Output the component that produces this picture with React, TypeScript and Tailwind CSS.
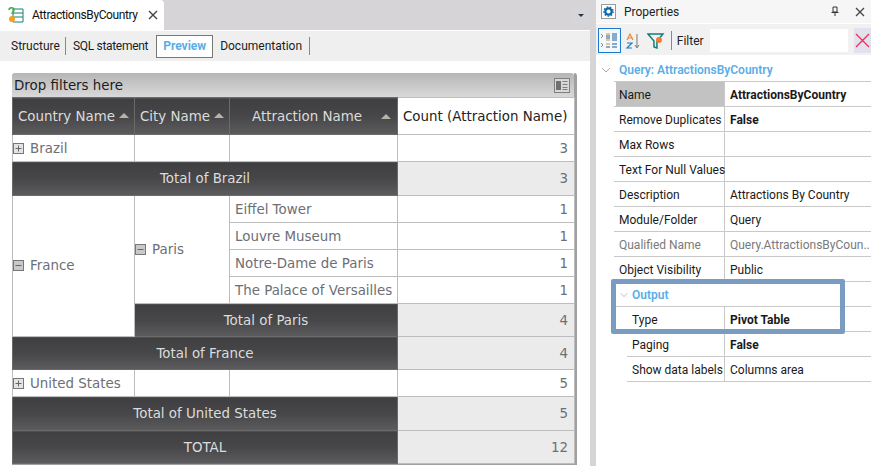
const grid = "font-['DejaVu_Sans',sans-serif] text-[13.4px]";
const ui = "font-['Roboto',sans-serif] text-[12px]";
const darkCell = 'bg-[linear-gradient(#3f3f41_0%,#474749_50%,#5c5c5e_100%)] text-[#dcdcdc] border border-[#6a6a6a] pt-[2px]';
const cell = 'border border-[#bdbdbd] text-[#6c6f76] bg-white pt-[2px]';
const countCell = 'border border-[#bdbdbd] text-[#6c6f76] text-right pr-[6px] pt-[2px]';

function PlusMinus({ minus }: { minus?: boolean }) {
  return (
    <svg width="11" height="11" viewBox="0 0 11 11" className="inline-block align-[-1px] mr-[6px]">
      <rect x="0.5" y="0.5" width="10" height="10" fill={minus ? '#c9c9c9' : '#e4e4e4'} stroke="#777" />
      <path d={minus ? 'M2.5 5.5h6' : 'M2.5 5.5h6M5.5 2.5v6'} stroke="#666" strokeWidth="1" />
    </svg>
  );
}

function SortUp() {
  return <span className="inline-block w-0 h-0 border-x-[5px] border-x-transparent border-b-[5px] border-b-[#b7b3a6] align-[3px]" />;
}

function Total({ label, span, value }: { label: string; span: number; value: number }) {
  return (
    <>
      <td colSpan={span} className={`${darkCell} text-center`}>{label}</td>
      <td className={`${countCell} bg-[#ebebeb]`}>{value}</td>
    </>
  );
}

function PivotTable() {
  return (
    <div className="w-[565px] border-r-[3px] border-b-[1px] border-[#a0a0a0] rounded-tr-[3px]">
      <div className="h-[24px] rounded-t-[3px] bg-[linear-gradient(#b5b5b7,#d9d9da)] flex items-center justify-between pl-[2px] pr-[4px] text-[#1c1c1c]">
        <span className="pt-[2px]">Drop filters here</span>
        <svg width="16" height="15" viewBox="0 0 16 15">
          <rect x="0.5" y="0.5" width="15" height="14" fill="#d8d8d8" stroke="#808080" />
          <rect x="2" y="3" width="5" height="9" fill="#707070" />
          <path d="M8.5 3.5h5M8.5 6.5h5M8.5 9.5h5M8.5 11.5h5" stroke="#808080" />
        </svg>
      </div>
      <table className="w-[562px] table-fixed border-collapse">
        <colgroup>
          <col className="w-[122px]" />
          <col className="w-[95px]" />
          <col className="w-[168px]" />
          <col className="w-[177px]" />
        </colgroup>
        <tbody>
          <tr className="h-[37px]">
            <td className={`${darkCell} pl-[5px] text-[#c9cdd4] whitespace-nowrap`}>Country Name <SortUp /></td>
            <td className={`${darkCell} pl-[5px] text-[#c9cdd4] whitespace-nowrap`}>City Name <SortUp /></td>
            <td className={`${darkCell} text-[#c9cdd4]`}>
              <div className="flex items-center justify-between pl-[22px] pr-[6px]">
                <span>Attraction Name</span>
                <SortUp />
              </div>
            </td>
            <td className="border border-[#bdbdbd] bg-white text-[#222] pl-[5px] pt-[2px] whitespace-nowrap">Count (Attraction Name)</td>
          </tr>
          <tr className="h-[27px]">
            <td className={cell}><PlusMinus />Brazil</td>
            <td className={cell} />
            <td className={cell} />
            <td className={`${countCell} bg-white`}>3</td>
          </tr>
          <tr className="h-[34px]"><Total label="Total of Brazil" span={3} value={3} /></tr>
          <tr className="h-[27px]">
            <td rowSpan={6} className={cell}><div className="pt-[4px] pb-[5px]"><PlusMinus minus />France</div></td>
            <td rowSpan={4} className={cell}><PlusMinus minus />Paris</td>
            <td className={`${cell} pl-[5px]`}>Eiffel Tower</td>
            <td className={`${countCell} bg-white`}>1</td>
          </tr>
          <tr className="h-[27px]">
            <td className={`${cell} pl-[5px]`}>Louvre Museum</td>
            <td className={`${countCell} bg-white`}>1</td>
          </tr>
          <tr className="h-[27px]">
            <td className={`${cell} pl-[5px]`}>Notre-Dame de Paris</td>
            <td className={`${countCell} bg-white`}>1</td>
          </tr>
          <tr className="h-[27px]">
            <td className={`${cell} pl-[5px] whitespace-nowrap`}>The Palace of Versailles</td>
            <td className={`${countCell} bg-white`}>1</td>
          </tr>
          <tr className="h-[33px]"><Total label="Total of Paris" span={2} value={4} /></tr>
          <tr className="h-0" />
          <tr className="h-[33px]"><Total label="Total of France" span={3} value={4} /></tr>
          <tr className="h-[27px]">
            <td className={`${cell} whitespace-nowrap`}><PlusMinus />United States</td>
            <td className={cell} />
            <td className={cell} />
            <td className={`${countCell} bg-white`}>5</td>
          </tr>
          <tr className="h-[34px]"><Total label="Total of United States" span={3} value={5} /></tr>
          <tr className="h-[33px]"><Total label="TOTAL" span={3} value={12} /></tr>
        </tbody>
      </table>
    </div>
  );
}

function Chevron({ small }: { small?: boolean }) {
  return (
    <svg width={small ? 8 : 10} height="6" viewBox="0 0 10 6" className="shrink-0">
      <path d="M1 1l4 4 4-4" fill="none" stroke="#a8a8a8" />
    </svg>
  );
}

function PropRow({ label, value, bold, muted, selected, indent }: {
  label: string; value?: string; bold?: boolean; muted?: boolean; selected?: boolean; indent?: boolean;
}) {
  return (
    <div className={`h-[25px] flex border-b border-[#c9c9c9] ${indent ? 'ml-[31px]' : 'ml-[18px]'} ${muted ? 'text-[#7a7a7a]' : 'text-[#1a1a1a]'}`}>
      <div className={`${indent ? 'w-[98px] pl-[5px]' : 'w-[111px] pl-[5px]'} shrink-0 flex items-center pt-[2px] border-r border-[#c9c9c9] whitespace-nowrap ${selected ? 'bg-[#c2c2c2] ml-[2px] !w-[109px] !pl-[3px]' : ''}`}>{label}</div>
      <div className={`pl-[5px] flex items-center pt-[2px] whitespace-nowrap ${bold ? 'font-bold' : ''}`}>{value}</div>
    </div>
  );
}

function PropertiesPanel() {
  return (
    <div className={`relative w-[275px] shrink-0 bg-white ${ui}`}>
      <div className="h-[24px] flex items-center bg-[#f6f6f6] border-b border-white pl-[5px] pr-[6px]">
        <span className="w-[15px] h-[15px] border border-[#9a9a9a] bg-white flex items-center justify-center">
          <svg width="11" height="11" viewBox="0 0 11 11">
            <circle cx="5.5" cy="5.5" r="3.2" fill="none" stroke="#0a6aa8" strokeWidth="2.2" />
            <circle cx="5.5" cy="5.5" r="4.6" fill="none" stroke="#0a6aa8" strokeWidth="1.4" strokeDasharray="1.6 1.6" />
          </svg>
        </span>
        <span className="ml-[8px] text-[#222]">Properties</span>
        <svg width="10" height="11" viewBox="0 0 10 11" className="ml-auto mr-[15px]">
          <path d="M3 1h4v5H3zM1.500 6.500h7M5 7v3" fill="none" stroke="#333" />
        </svg>
        <svg width="10" height="10" viewBox="0 0 10 10"><path d="M1 1l8 8M9 1l-8 8" stroke="#444" strokeWidth="1.300" /></svg>
      </div>
      <div className="h-[31px] flex items-center pl-[2px] pt-[2px] bg-[#f1f1f1]">
        <span className="w-[23px] h-[25px] border border-[#1f78c8] bg-[#f2f8fd] flex items-center justify-center">
          <svg width="19" height="18" viewBox="0 0 19 18">
            <path d="M1 2l2 2-2 2M1 11l2 2-2 2" fill="none" stroke="#888" />
            <path d="M6 2h4M6 8h4M6 12h4" stroke="#e8872c" strokeWidth="1.200" />
            <path d="M6 4h4M6 6h4M6 15h4M12 2h5M12 4h5M12 6h5M12 8h5M12 12h5M12 15h5" stroke="#1d5f96" strokeWidth="1.200" />
          </svg>
        </span>
        <svg width="16" height="18" viewBox="0 0 16 18" className="ml-[4px]">
          <path d="M2 8l3-6 3 6M3 6h4" fill="none" stroke="#e8872c" strokeWidth="1.200" />
          <path d="M2 11h5l-5 5h5" fill="none" stroke="#1d7fc4" strokeWidth="1.200" />
          <path d="M12 2v13M10 13l2 3 2-3" fill="none" stroke="#777" />
        </svg>
        <svg width="19" height="18" viewBox="0 0 19 18" className="ml-[6px]">
          <path d="M1 2h15l-6 7v7l-3-1V9z" fill="none" stroke="#0e7f7a" strokeWidth="1.500" />
          <circle cx="12" cy="8" r="3" fill="#f07c3c" />
        </svg>
        <span className="w-px h-[19px] bg-[#7c8a9c] ml-[5px]" />
        <span className="ml-[5px] pt-[1px] text-[#222] w-[32px]">Filter</span>
        <span className="w-[139px] h-[23px] bg-white ml-[1px]" />
        <span className="w-[17px] h-[25px] ml-[6px] bg-[#e2e2ee] flex items-center justify-center">
          <svg width="15" height="15" viewBox="0 0 15 15"><path d="M1 1l13 13M14 1L1 14" stroke="#e8305a" strokeWidth="1.300" /></svg>
        </span>
      </div>
      <div className="h-[26px] flex items-center pl-[5px] pt-[4px] text-[#5aaee8] font-semibold gap-[8px]">
        <Chevron />
        <span>Query: AttractionsByCountry</span>
      </div>
      <div className="border-t border-[#c9c9c9] ml-[18px]" />
      <PropRow selected label="Name" value="AttractionsByCountry" bold />
      <PropRow label="Remove Duplicates" value="False" bold />
      <PropRow label="Max Rows" />
      <PropRow label="Text For Null Values" />
      <PropRow label="Description" value="Attractions By Country" />
      <PropRow label="Module/Folder" value="Query" />
      <PropRow muted label="Qualified Name" value="Query.AttractionsByCoun.." />
      <PropRow label="Object Visibility" value="Public" />
      <div className="h-[25px] ml-[18px] border-b border-[#c9c9c9] flex items-center pl-[6px] pt-[2px] gap-[4px] text-[#5aaee8] font-semibold">
        <Chevron small />
        <span>Output</span>
      </div>
      <PropRow indent label="Type" value="Pivot Table" bold />
      <PropRow indent label="Paging" value="False" bold />
      <PropRow indent label="Show data labels" value="Columns area" />
      {/* highlight box drawn over the Output group */}
      <div className="absolute left-[15px] top-[279px] w-[234px] h-[55px] border-[5px] border-[#7b9cc1] rounded-[2px]" />
    </div>
  );
}

export default function App() {
  return (
    <div className="w-[871px] h-[466px] flex overflow-hidden bg-white">
      <div className="w-[590px] shrink-0 flex flex-col">
        <div className={`h-[30px] bg-[#d6d4d7] flex items-end justify-between ${ui}`}>
          <div className="w-[164px] h-[30px] bg-white rounded-tr-[4px] flex items-center pl-[7px] text-[#111]">
            <svg width="17" height="18" viewBox="0 0 17 18" className="shrink-0">
              <path d="M6 3h10v13H6zM6 7h10M6 11h10" fill="none" stroke="#15806a" />
              <path d="M2 4c0-3 5-3 5 0 0 2-2 2-2 4" fill="none" stroke="#3fae3f" strokeWidth="1.500" />
              <circle cx="5" cy="13" r="3" fill="#f3a11c" />
            </svg>
            <span className="ml-[8px] tracking-[-0.4px] whitespace-nowrap">AttractionsByCountry</span>
            <svg width="10" height="10" viewBox="0 0 10 10" className="ml-[10px] shrink-0"><path d="M1 1l8 8M9 1l-8 8" stroke="#444" strokeWidth="1.400" /></svg>
          </div>
          <div className="w-[16px] h-[17px] bg-[#d3d6dd] self-center mr-[1px] flex items-center justify-center">
            <span className="w-0 h-0 border-x-[3px] border-x-transparent border-t-[3px] border-t-[#333]" />
          </div>
        </div>
        <div className={`h-[30px] mt-[1px] bg-[#efefef] flex items-center pl-[6px] text-[#1c1c1c] ${ui}`}>
          <span className="pl-[5px] pr-[5px] border-r border-[#888] leading-[18px]">Structure</span>
          <span className="pl-[7px] pr-[8px] leading-[18px] tracking-[-0.3px]">SQL statement</span>
          <span className="px-[6px] h-[23px] flex items-center border border-[#777] bg-white text-[#5aaee8] font-bold">Preview</span>
          <span className="pl-[7px] pr-[7px] border-r border-[#888] leading-[18px]">Documentation</span>
        </div>
        <div className={`pl-[12px] pt-[12px] ${grid}`}>
          <PivotTable />
        </div>
      </div>
      <div className="w-[6px] shrink-0 bg-[#d6d4d7]" />
      <PropertiesPanel />
    </div>
  );
}
